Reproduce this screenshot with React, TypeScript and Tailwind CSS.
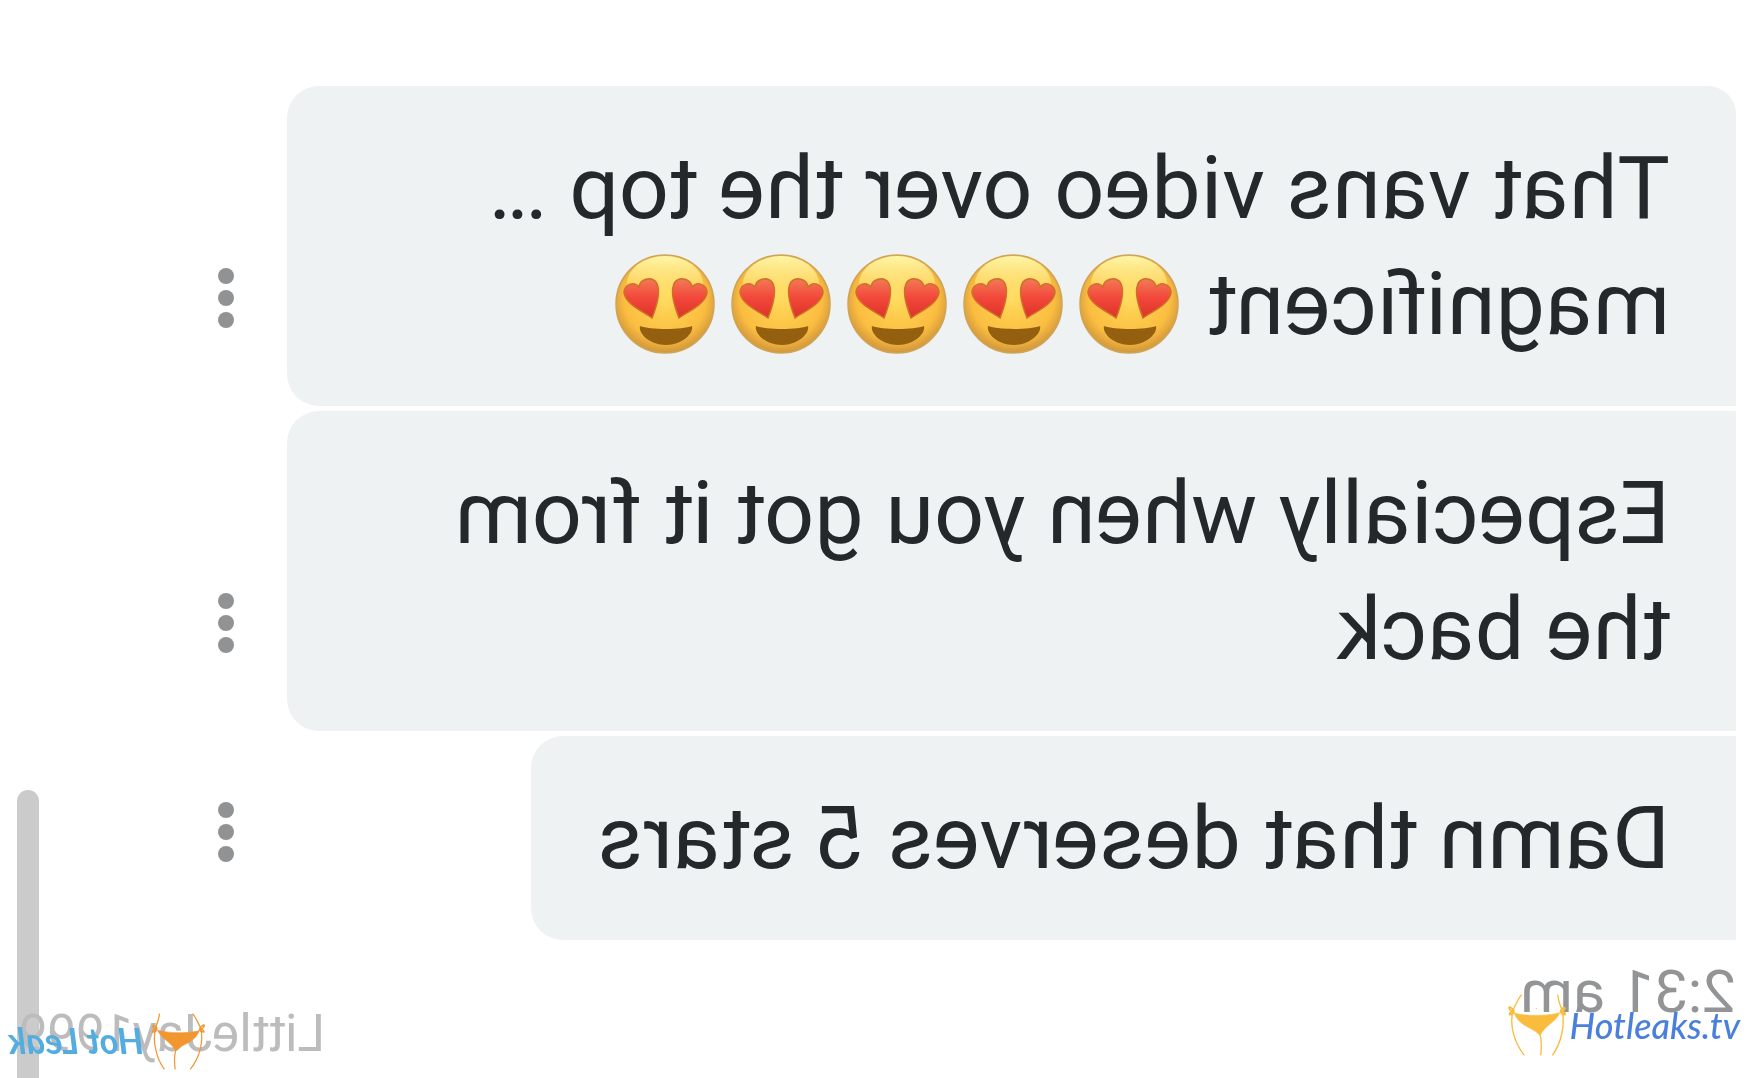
type Message = {
  id: number;
  text: string;
  hearts: number;
  first?: boolean;
};

const messages: Message[] = [
  { id: 1, text: "That vans video over the top … magnificent", hearts: 5, first: true },
  { id: 2, text: "Especially when you got it from the back", hearts: 0 },
  { id: 3, text: "Damn that deserves 5 stars", hearts: 0 },
];

const heartPath =
  "M36 64C28 58 10 51 8 39C8 30 18 27 23 33C24 25 35 22 40 28C46 37 40 54 36 64Z";

function HeartEyes() {
  return (
    <svg viewBox="0 0 100 100" className="size-[100px]" role="img" aria-label="heart eyes">
      <defs>
        <radialGradient id="face" cx="50%" cy="44%" r="56%">
          <stop offset="0" stopColor="#ffd95a" />
          <stop offset="0.75" stopColor="#fbbd40" />
          <stop offset="1" stopColor="#d0963c" />
        </radialGradient>
        <linearGradient id="shine" x1="0" y1="0" x2="0" y2="1">
          <stop offset="0" stopColor="#fff6a8" />
          <stop offset="1" stopColor="#ffe26a" stopOpacity="0" />
        </linearGradient>
        <linearGradient id="heart" x1="0" y1="0" x2="0" y2="1">
          <stop offset="0" stopColor="#f27a55" />
          <stop offset="0.5" stopColor="#f2463a" />
          <stop offset="1" stopColor="#dc3428" />
        </linearGradient>
      </defs>
      <circle cx="50" cy="50" r="49" fill="url(#face)" stroke="#cfa456" strokeWidth="1.5" />
      <ellipse cx="50" cy="30" rx="38" ry="28" fill="url(#shine)" />
      <path d={heartPath} fill="url(#heart)" stroke="#cf7028" strokeWidth="1.5" />
      <g transform="translate(99 0) scale(-1 1)">
        <path d={heartPath} fill="url(#heart)" stroke="#cf7028" strokeWidth="1.5" />
      </g>
      <path
        d="M23 72C33 76 65 76 75 72C77 79 66 91 49 91C33 91 21 79 23 72Z"
        fill="#94600f"
      />
    </svg>
  );
}

function MoreButton() {
  return (
    <button type="button" aria-label="More" className="flex w-[50px] shrink-0 justify-center">
      <svg viewBox="0 0 16 60" className="h-[60px] w-4" fill="#909294">
        <circle cx="8" cy="8" r="8" />
        <circle cx="8" cy="30" r="8" />
        <circle cx="8" cy="52" r="8" />
      </svg>
    </button>
  );
}

function MessageRow({ message }: { message: Message }) {
  return (
    <div className="flex items-end gap-9">
      <div className="flex flex-1">
        <div
          className={`rounded-r-[32px] bg-[#eef2f3] px-[66px] py-[44px] text-[88px] leading-[116px] text-[#25282b] ${
            message.first ? "rounded-tl-[28px]" : ""
          }`}
        >
          {message.text}
          {message.hearts > 0 && (
            <span className="ml-7 inline-flex gap-4 pt-2 align-top leading-none">
              {Array.from({ length: message.hearts }, (_, i) => (
                <HeartEyes key={i} />
              ))}
            </span>
          )}
        </div>
      </div>
      <div className="pb-[78px]">
        <MoreButton />
      </div>
    </div>
  );
}

function Figure({ className }: { className: string }) {
  return (
    <svg viewBox="0 0 172 186" className={className} fill="none" stroke="currentColor">
      <path
        d="M18 57C45 67 120 67 154 56C145 82 112 92 95 124C76 100 32 98 18 57Z"
        fill="currentColor"
        strokeWidth="2"
      />
      <path
        d="M40 2C28 16 22 34 14 48C4 88 14 142 48 184M148 2C150 20 156 36 162 50C170 92 160 146 132 184M95 122C101 142 100 160 97 184"
        strokeWidth="4"
      />
      <path
        d="M18 52C10 40 2 36 2 42C4 48 12 52 18 52C8 52 2 58 4 62C10 62 16 58 18 52M156 52C160 40 170 38 170 44C168 48 162 52 156 52C164 52 172 56 170 62C164 62 158 58 156 52"
        strokeWidth="5"
      />
      <circle cx="84" cy="43" r="2" fill="currentColor" stroke="none" />
    </svg>
  );
}

export default function App() {
  return (
    <div className="relative min-h-screen overflow-hidden bg-white font-['Roboto',sans-serif]">
      {/* The whole conversation is flipped, as seen by the front camera */}
      <div className="relative min-h-screen -scale-x-100">
        <main className="flex flex-col gap-[5px] pt-[86px] pr-[201px] pl-7">
          {messages.map((message) => (
            <MessageRow key={message.id} message={message} />
          ))}
        </main>

        <footer className="flex items-start justify-between pt-4 pr-[18px] pl-7">
          <time className="text-[60px] leading-[72px] text-[#929496]">2:31 am</time>
          <span className="pt-[45px] text-[51px] leading-[66px] text-[#bcbcbc]">
            LittleJay1999
          </span>
        </footer>

        {/* Scrollbar thumb */}
        <div className="absolute top-[790px] right-[17px] bottom-0 -z-10 w-[22px] rounded-t-full bg-[#cbcbcb]" />

        {/* Watermark that was flipped along with the chat */}
        <div className="absolute right-2 bottom-2 flex items-center gap-2 font-['Lato',sans-serif]">
          <Figure className="h-[57px] w-[53px] text-[#f2962f]" />
          <span className="pb-1 text-[36px] leading-[48px] font-bold text-[#53ade0] italic">
            Hot Leak
          </span>
        </div>
      </div>

      <a
        href="#"
        className="absolute right-6 bottom-[22px] flex items-center gap-1 font-['Lato',sans-serif]"
      >
        <Figure className="h-[62px] w-[58px] text-[#f9bc3c]" />
        <span className="text-[36px] leading-[48px] font-medium text-[#4a80dc] italic">
          Hotleaks.tv
        </span>
      </a>
    </div>
  );
}
